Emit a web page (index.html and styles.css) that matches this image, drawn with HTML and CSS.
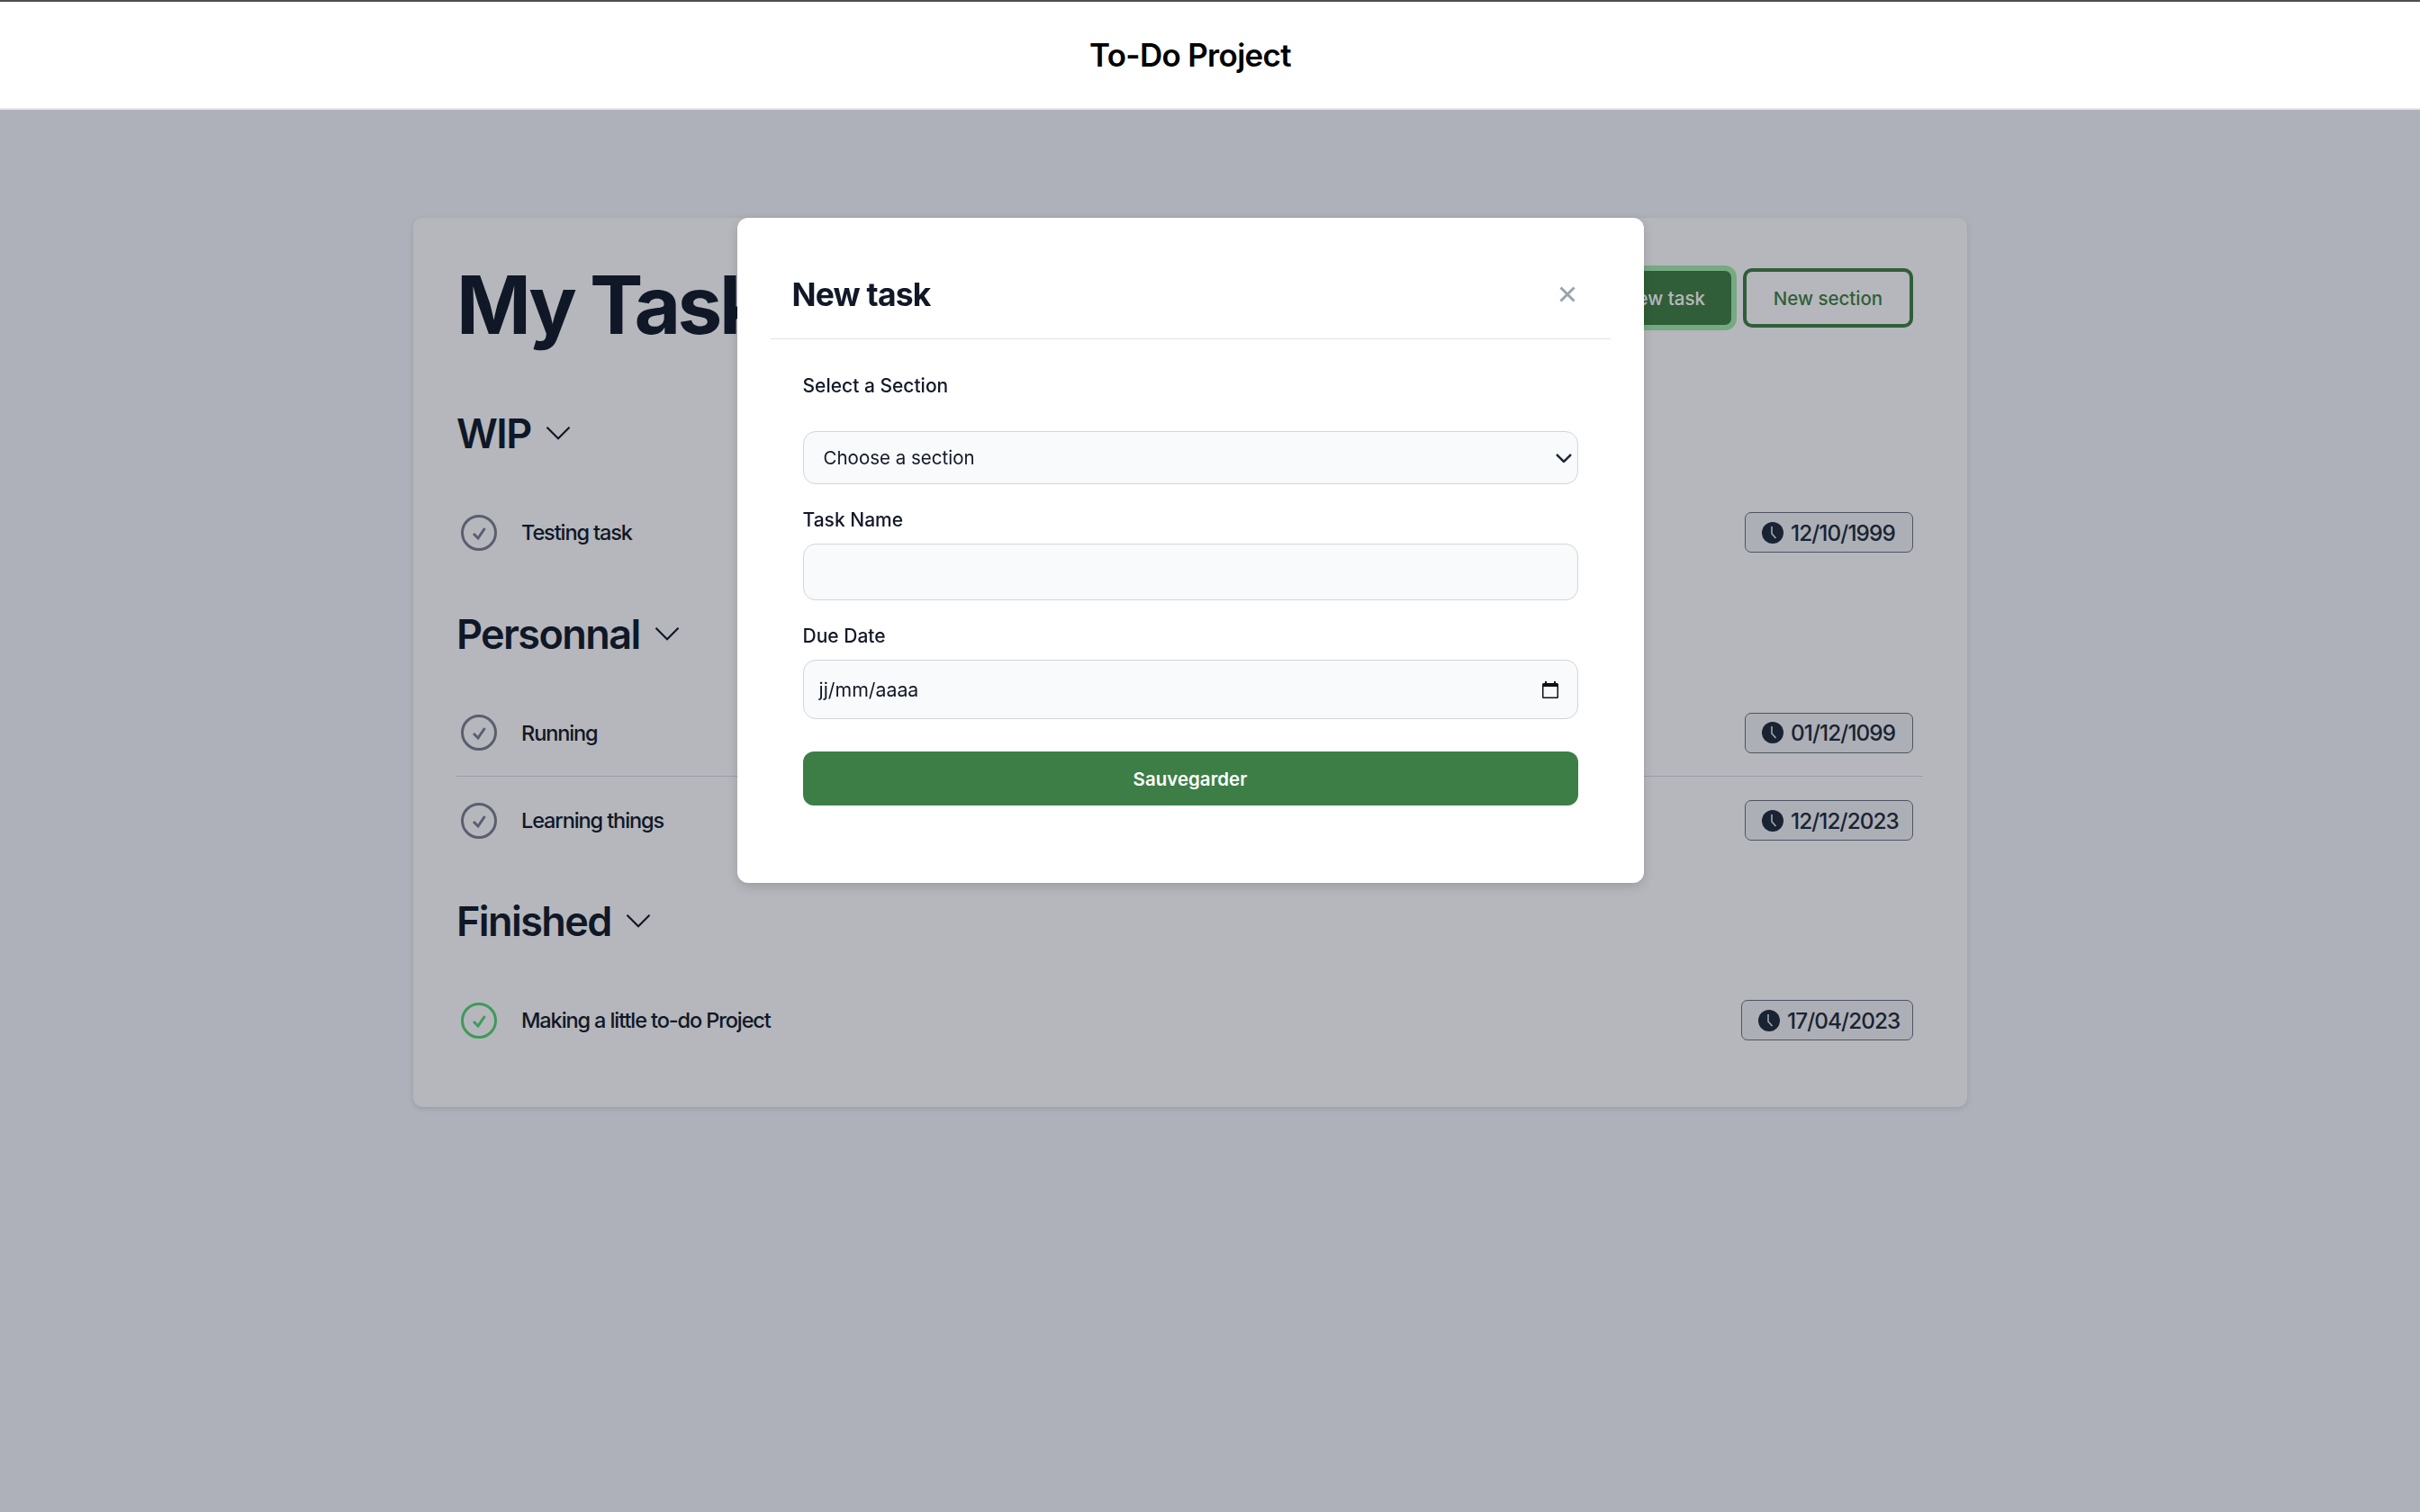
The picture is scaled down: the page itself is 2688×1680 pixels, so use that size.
FILE: index.html
```html
<!DOCTYPE html>
<html lang="fr">
  <head>
    <meta charset="UTF-8" />
    <meta name="viewport" content="width=device-width, initial-scale=1.0" />
    <title>To-Do Project</title>
    <link rel="stylesheet" href="styles.css">
  </head>

  <body>
    <header class="topbar">
      <span class="brand">To-Do Project</span>
    </header>

    <main class="page">
      <section class="card">
        <div class="card-head">
          <h1>My Tasks</h1>
          <div class="actions">
            <button class="btn btn-solid">New task</button>
            <button class="btn btn-outline">New section</button>
          </div>
        </div>

        <div class="group group-first">
          <h2>WIP <svg class="chevron" viewBox="0 0 24 24"><path d="M19.5 8.25l-7.5 7.5-7.5-7.5" /></svg></h2>
          <div class="task">
            <svg class="check" viewBox="0 0 40 40"><circle cx="20" cy="20" r="18.5" /><path d="M14 21l5 5 7.5-11" /></svg>
            <span class="task-name">Testing task</span>
            <span class="due"><svg class="clock" viewBox="0 0 24 24"><circle cx="12" cy="12" r="12" /><path d="M11 5v8l4.5 5" /></svg>12/10/1999</span>
          </div>
        </div>

        <div class="group">
          <h2>Personnal <svg class="chevron" viewBox="0 0 24 24"><path d="M19.5 8.25l-7.5 7.5-7.5-7.5" /></svg></h2>
          <div class="task task-line">
            <svg class="check" viewBox="0 0 40 40"><circle cx="20" cy="20" r="18.5" /><path d="M14 21l5 5 7.5-11" /></svg>
            <span class="task-name">Running</span>
            <span class="due"><svg class="clock" viewBox="0 0 24 24"><circle cx="12" cy="12" r="12" /><path d="M11 5v8l4.5 5" /></svg>01/12/1099</span>
          </div>
          <div class="task">
            <svg class="check" viewBox="0 0 40 40"><circle cx="20" cy="20" r="18.5" /><path d="M14 21l5 5 7.5-11" /></svg>
            <span class="task-name">Learning things</span>
            <span class="due"><svg class="clock" viewBox="0 0 24 24"><circle cx="12" cy="12" r="12" /><path d="M11 5v8l4.5 5" /></svg>12/12/2023</span>
          </div>
        </div>

        <div class="group">
          <h2>Finished <svg class="chevron" viewBox="0 0 24 24"><path d="M19.5 8.25l-7.5 7.5-7.5-7.5" /></svg></h2>
          <div class="task">
            <svg class="check check-done" viewBox="0 0 40 40"><circle cx="20" cy="20" r="18.5" /><path d="M14 21l5 5 7.5-11" /></svg>
            <span class="task-name">Making a little to-do Project</span>
            <span class="due due-wide"><svg class="clock" viewBox="0 0 24 24"><circle cx="12" cy="12" r="12" /><path d="M11 5v8l4.5 5" /></svg>17/04/2023</span>
          </div>
        </div>
      </section>
    </main>

    <!-- modal stays over everything but the top bar -->
    <div class="overlay">
      <div class="modal">
        <div class="modal-head">
          <h3>New task</h3>
          <svg class="close" viewBox="0 0 18 18"><path d="M1.5 1.5l15 15M16.5 1.5l-15 15" /></svg>
        </div>
        <form class="modal-form">
          <label class="label label-first">Select a Section</label>
          <div class="field field-select">
            <span>Choose a section</span>
            <svg class="select-arrow" viewBox="0 0 18 10"><path d="M1 1l8 8 8-8" /></svg>
          </div>
          <label class="label">Task Name</label>
          <input class="field field-text" type="text">
          <label class="label">Due Date</label>
          <div class="field field-date">
            <span>jj/mm/aaaa</span>
            <svg class="calendar" viewBox="0 0 18 19"><path d="M3 0h2v2h8V0h2v2h1.5A1.5 1.5 0 0 1 18 3.5v14a1.5 1.5 0 0 1-1.5 1.5h-15A1.5 1.5 0 0 1 0 17.5v-14A1.5 1.5 0 0 1 1.500 2H3zM1.500 6v11.500h15V6z" /></svg>
          </div>
          <button class="save" type="button">Sauvegarder</button>
        </form>
      </div>
    </div>
  </body>
</html>
```

FILE: styles.css
```css
html,
body {
  height: 100%;
  margin: 0;
}

body {
  display: flex;
  flex-direction: column;
  background: #f5f6fc;
  color: #111827;
  font-family: Inter, "Liberation Sans", sans-serif;
}

.topbar {
  position: relative;
  z-index: 20;
  display: flex;
  align-items: center;
  justify-content: center;
  height: 122px;
  box-sizing: border-box;
  padding-right: 44px;
  background: #fff;
  border-top: 2px solid #4f4f4f;
  border-bottom: 2px solid #e5e7eb;
}

.brand {
  color: #000;
  font-size: 35px;
  font-weight: 600;
  letter-spacing: -0.7px;
}

.page {
  flex: 1;
  padding: 120px 503px 0 459px;
}

/* Card */
.card {
  box-sizing: border-box;
  height: 988px;
  padding: 48px 49px 48px 48px;
  background: #fff;
  border-radius: 10px;
  box-shadow: 0 2px 6px rgba(0, 0, 0, 0.12);
}

.card-head {
  display: flex;
  align-items: center;
  justify-content: space-between;
  height: 98px;
  margin-bottom: 61px;
  padding-right: 11px;
}

h1 {
  margin: 0;
  font-size: 89px;
  font-weight: 700;
  line-height: 98px;
  letter-spacing: -3.5px;
}

.actions {
  display: flex;
  gap: 10px;
  margin-bottom: 16px;
}

.btn {
  box-sizing: border-box;
  height: 66px;
  border-radius: 10px;
  font-family: inherit;
  font-size: 20.500px;
  font-weight: 500;
  white-space: nowrap;
}

.btn-solid {
  padding: 0 29px;
  background: #3f7f42;
  border: 3px solid #a3edac;
  box-shadow: 0 0 0 3px #a3edac;
  color: #fff;
}

.btn-outline {
  width: 189px;
  padding: 0;
  background: #fff;
  border: 4px solid #3f7f42;
  color: #3f7f42;
}

.group {
  margin-bottom: 31px;
}

.group-first {
  margin-bottom: 32px;
}

h2 {
  display: flex;
  align-items: center;
  gap: 10px;
  height: 64px;
  margin: 0 0 30px;
  font-size: 45px;
  font-weight: 600;
  letter-spacing: -1.6px;
}

.chevron {
  width: 40px;
  height: 40px;
  fill: none;
  stroke: #111827;
  stroke-width: 1.3;
}

/* Task rows */
.task {
  display: flex;
  align-items: center;
  height: 97px;
  box-sizing: border-box;
  padding: 0 11px 0 5px;
}

.task-line {
  border-bottom: 1px solid #d8dae0;
}

.check {
  width: 40px;
  height: 40px;
  fill: none;
  stroke: #7b8090;
  stroke-width: 3;
}

.check-done {
  stroke: #55d571;
}

.task-name {
  flex: 1;
  margin-left: 27px;
  font-size: 23.500px;
  font-weight: 500;
  letter-spacing: -1.1px;
}

.due {
  display: flex;
  align-items: center;
  gap: 8px;
  box-sizing: border-box;
  width: 187px;
  height: 45px;
  padding-left: 18px;
  background: #f3f4f6;
  border: 1px solid #6a6e7e;
  border-radius: 7px;
  color: #1f2937;
  font-size: 24.300px;
  font-weight: 500;
  letter-spacing: -0.9px;
}

.due-wide {
  width: 191px;
}

.clock {
  width: 24px;
  height: 24px;
  fill: #1f2937;
}

.clock path {
  fill: none;
  stroke: #f3f4f6;
  stroke-width: 1.5;
}

/* Modal */
.overlay {
  position: fixed;
  top: 0;
  left: 0;
  right: 0;
  bottom: 0;
  z-index: 10;
  padding: 242px 44px 0 0;
  background: rgba(17, 24, 39, 0.31);
}

.modal {
  box-sizing: border-box;
  width: 1007px;
  height: 739px;
  margin: 0 auto;
  padding: 0 37px;
  background: #fff;
  border-radius: 12px;
  box-shadow: 0 4px 12px rgba(0, 0, 0, 0.15);
}

.modal-head {
  display: flex;
  align-items: center;
  justify-content: space-between;
  height: 135px;
  box-sizing: border-box;
  padding: 36px 39px 0 24px;
  border-bottom: 1px solid #e0e2e7;
}

h3 {
  margin: 0;
  font-size: 35.500px;
  font-weight: 700;
  letter-spacing: -0.8px;
}

.close {
  width: 18px;
  height: 18px;
  fill: none;
  stroke: #9ca3af;
  stroke-width: 3;
}

.modal-form {
  display: flex;
  flex-direction: column;
  padding: 0 36px;
}

.label {
  display: block;
  height: 28px;
  margin: 26px 0 0;
  font-size: 21px;
  font-weight: 500;
  line-height: 28px;
}

.label-first {
  margin: 38px 0 36px;
}

.field {
  box-sizing: border-box;
  width: 861px;
  background: #f9fafb;
  border: 1px solid #d1d5db;
  border-radius: 14px;
  color: #111827;
}

.field-select,
.field-date {
  display: flex;
  align-items: center;
  justify-content: space-between;
}

.field-select {
  height: 59px;
  padding: 0 6px 0 22px;
  font-size: 20.500px;
}

.field-text {
  height: 63px;
  margin-top: 12px;
}

.field-date {
  height: 66px;
  margin-top: 12px;
  padding: 0 21px 0 17px;
  font-size: 21.300px;
}

.select-arrow {
  width: 18px;
  height: 10px;
  fill: none;
  stroke: #1f2937;
  stroke-width: 2.500;
}

.calendar {
  width: 18px;
  height: 19px;
  fill: #111;
}

.save {
  width: 861px;
  height: 60px;
  margin-top: 36px;
  background: #3d7e46;
  border: 0;
  border-radius: 12px;
  color: #fff;
  font-family: inherit;
  font-size: 20.500px;
  font-weight: 600;
}
```
